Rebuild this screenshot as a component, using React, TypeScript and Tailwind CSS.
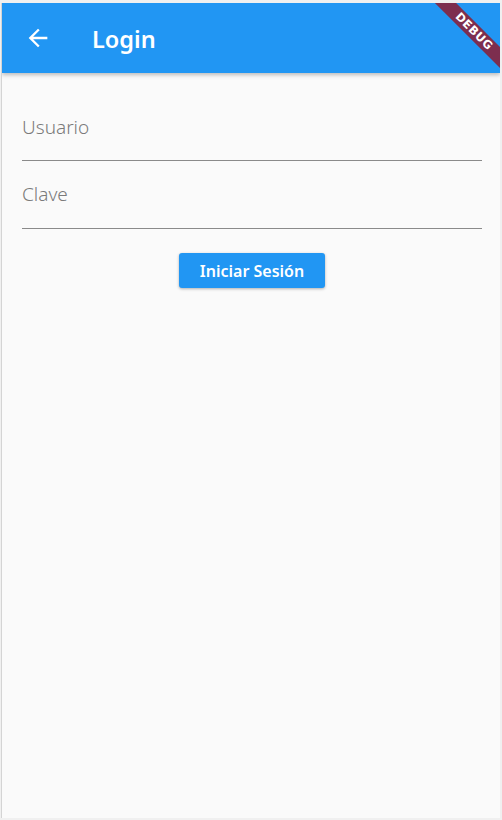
import React from "react";

export default function App() {
  const font = { fontFamily: '"Noto Sans", "Open Sans", sans-serif' };
  return (
    <div className="w-[502px] h-[820px] bg-[#f0f0f0] pt-[3px] pl-[1px] pr-[2px] pb-[2px]" style={font}>
      <div className="relative w-full h-full overflow-hidden bg-[#fafafa] border-l border-[#d4d4d4]">
        <div className="relative z-10 h-[70px] bg-[#2196f3] flex items-center shadow-[0_2px_4px_rgba(0,0,0,0.25)]">
          <div className="w-[70px] flex items-center justify-center pl-[1px]">
            <svg width="28" height="28" viewBox="0 0 24 24" fill="white">
              <path d="M20 11H7.83l5.59-5.59L12 4l-8 8 8 8 1.41-1.41L7.83 13H20v-2z" />
            </svg>
          </div>
          <div className="pl-[20px] pt-[3px] text-white text-[23.5px] font-semibold leading-none">Login</div>
        </div>
        <div className="pl-[20px] pr-[18px] pt-[12px]">
          <div className="h-[76px] flex flex-col justify-end border-b border-[#8a8a8a]">
            <div className="text-[19px] font-light text-[#7a7a7a] pb-[23px] leading-none">Usuario</div>
          </div>
          <div className="h-[68px] flex flex-col justify-end border-b border-[#8a8a8a]">
            <div className="text-[19px] font-light text-[#7a7a7a] pb-[24px] leading-none">Clave</div>
          </div>
          <div className="flex justify-center pt-[24px]">
            <button className="w-[146px] h-[35px] rounded-[3px] bg-[#2196f3] text-white text-[16px] font-semibold shadow-[0_1px_3px_rgba(0,0,0,0.3)]">
              Iniciar Sesión
            </button>
          </div>
        </div>
        <div className="absolute z-20 left-[412px] top-[21px] w-[120px] h-[15px] rotate-45 bg-[#7d2e4f] flex items-center justify-center">
          <span className="text-white text-[11.5px] font-bold tracking-[0.5px] leading-none" style={{ fontFamily: '"DejaVu Sans", sans-serif' }}>DEBUG</span>
        </div>
      </div>
    </div>
  );
}
